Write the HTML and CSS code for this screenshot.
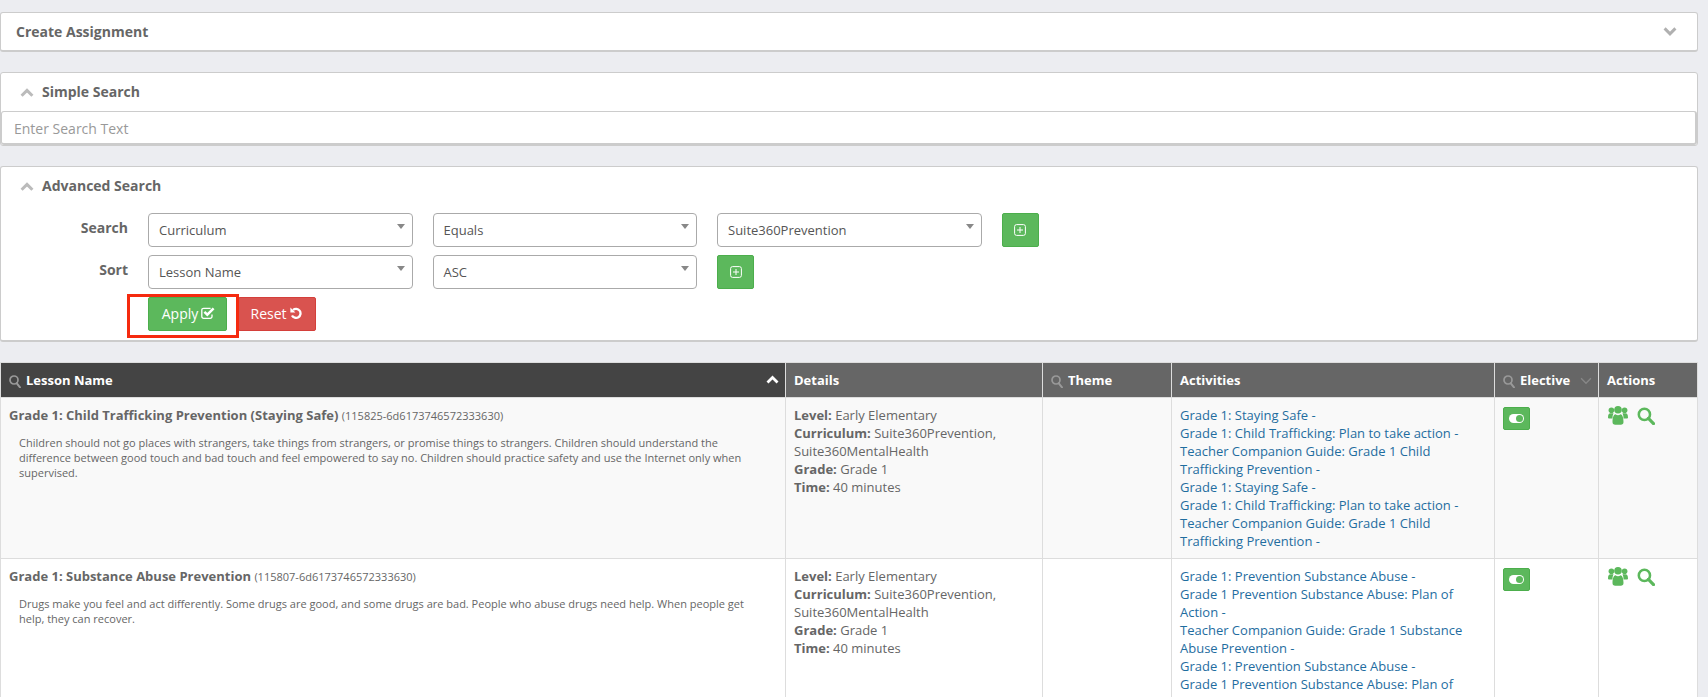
FILE: index.html
```html
<!DOCTYPE html>
<html lang="en">
<head>
<meta charset="utf-8">
<title>Assignments</title>
<link rel="stylesheet" href="styles.css">
</head>
<body>
<svg class="defs" width="0" height="0" aria-hidden="true">
  <symbol id="i-search" viewBox="0 0 17 17"><circle cx="7" cy="7" r="5.300" fill="none" stroke="currentColor" stroke-width="2.400"/><path d="M10.800 10.800 15.600 15.600" stroke="currentColor" stroke-width="3" stroke-linecap="round"/></symbol>
  <symbol id="i-search-thin" viewBox="0 0 12 13"><circle cx="5" cy="5" r="4" fill="none" stroke="currentColor" stroke-width="1.700"/><path d="M7.800 8.300 11 12.300" stroke="currentColor" stroke-width="2" stroke-linecap="round"/></symbol>
  <symbol id="i-up" viewBox="0 0 14 9"><path d="M1.600 7.800 7 2.400l5.400 5.400" fill="none" stroke="currentColor" stroke-width="3"/></symbol>
  <symbol id="i-down" viewBox="0 0 14 9"><path d="M1.600 1.400 7 6.800l5.400-5.400" fill="none" stroke="currentColor" stroke-width="3"/></symbol>
  <symbol id="i-down-thin" viewBox="0 0 13 9"><path d="M1 1.500 6.500 7 12 1.500" fill="none" stroke="currentColor" stroke-width="1.500"/></symbol>
  <symbol id="i-plus" viewBox="0 0 12 12"><rect x=".6" y=".6" width="10.800" height="10.800" rx="2" fill="none" stroke="currentColor" stroke-width="1"/><path d="M6 3v6M3 6h6" stroke="currentColor" stroke-width="1"/></symbol>
  <symbol id="i-check" viewBox="0 0 14 12"><path d="M11 7.500v2a1.800 1.800 0 0 1-1.800 1.800H2.600A1.800 1.800 0 0 1 .8 9.500V3.100a1.800 1.800 0 0 1 1.800-1.800h7" fill="none" stroke="currentColor" stroke-width="1.300"/><path d="M3.400 4.800 6.300 7.700 12.600 1.400" fill="none" stroke="currentColor" stroke-width="2.500"/></symbol>
  <symbol id="i-undo" viewBox="0 0 12 12"><path d="M3 3A4.500 4.500 0 1 1 2 8.400" fill="none" stroke="currentColor" stroke-width="2.300"/><path d="M.4.600v5h5z" fill="currentColor"/></symbol>
  <symbol id="i-users" viewBox="0 0 20 19"><circle cx="3.400" cy="4.300" r="2.800" fill="currentColor"/><circle cx="16.600" cy="4.300" r="2.800" fill="currentColor"/><circle cx="10" cy="3.800" r="3.800" fill="currentColor"/><path d="M0 11.500C0 8.500 1 7.300 2.500 7.300H5.500C4.800 9 4.500 10 4.500 12.500H1.500C.5 12.500 0 12.200 0 11.500zM20 11.500c0-3-1-4.200-2.500-4.200H14.500c.7 1.700 1 2.700 1 5.200h3c1 0 1.500-.3 1.500-1z" fill="currentColor"/><path d="M4.500 16c0-5 1.500-7.700 3-7.700.8.700 1.500 1 2.500 1s1.700-.3 2.500-1c1.500 0 3 2.700 3 7.700 0 1.700-1 2.800-2.700 2.800H7.200C5.500 18.800 4.500 17.700 4.500 16z" fill="currentColor"/></symbol>
</svg>

<main class="page">
  <section class="panel panel-assign">
    <h2 class="panel-title">Create Assignment</h2>
    <svg class="chev-assign"><use href="#i-down"/></svg>
  </section>

  <section class="panel panel-simple">
    <h2 class="panel-title with-chev"><svg class="chev"><use href="#i-up"/></svg>Simple Search</h2>
    <input class="search-input" type="text" placeholder="Enter Search Text">
  </section>

  <section class="panel panel-advanced">
    <h2 class="panel-title with-chev"><svg class="chev"><use href="#i-up"/></svg>Advanced Search</h2>
    <div class="form-row">
      <span class="form-label">Search</span>
      <div class="select">Curriculum</div>
      <div class="select">Equals</div>
      <div class="select">Suite360Prevention</div>
      <button class="btn-add" type="button" aria-label="Add"><svg class="plus"><use href="#i-plus"/></svg></button>
    </div>
    <div class="form-row">
      <span class="form-label">Sort</span>
      <div class="select">Lesson Name</div>
      <div class="select">ASC</div>
      <button class="btn-add" type="button" aria-label="Add"><svg class="plus"><use href="#i-plus"/></svg></button>
    </div>
    <div class="form-actions">
      <button class="btn btn-apply" type="button">Apply<svg class="btn-ico ico-check"><use href="#i-check"/></svg></button>
      <button class="btn btn-reset" type="button">Reset<svg class="btn-ico ico-undo"><use href="#i-undo"/></svg></button>
      <span class="highlight"></span>
    </div>
  </section>

  <table class="lessons">
    <colgroup>
      <col class="c-lesson"><col class="c-details"><col class="c-theme"><col class="c-activities"><col class="c-elective"><col class="c-actions">
    </colgroup>
    <thead>
      <tr>
        <th class="th-sorted"><svg class="th-search"><use href="#i-search-thin"/></svg>Lesson Name<svg class="sort-up"><use href="#i-up"/></svg></th>
        <th>Details</th>
        <th><svg class="th-search"><use href="#i-search-thin"/></svg>Theme</th>
        <th>Activities</th>
        <th><svg class="th-search"><use href="#i-search-thin"/></svg>Elective<svg class="sort-down"><use href="#i-down-thin"/></svg></th>
        <th>Actions</th>
      </tr>
    </thead>
    <tbody>
      <tr class="odd">
        <td>
          <div class="lesson-title"><strong>Grade 1: Child Trafficking Prevention (Staying Safe)</strong> <small>(115825-6d6173746572333630)</small></div>
          <p class="lesson-desc">Children should not go places with strangers, take things from strangers, or promise things to strangers. Children should understand the difference between good touch and bad touch and feel empowered to say no. Children should practice safety and use the Internet only when supervised.</p>
        </td>
        <td><b>Level:</b> Early Elementary<br><b>Curriculum:</b> Suite360Prevention, Suite360MentalHealth<br><b>Grade:</b> Grade 1<br><b>Time:</b> 40 minutes</td>
        <td></td>
        <td class="links">
          <a href="#">Grade 1: Staying Safe -</a>
          <a href="#">Grade 1: Child Trafficking: Plan to take action -</a>
          <a href="#">Teacher Companion Guide: Grade 1 Child Trafficking Prevention -</a>
          <a href="#">Grade 1: Staying Safe -</a>
          <a href="#">Grade 1: Child Trafficking: Plan to take action -</a>
          <a href="#">Teacher Companion Guide: Grade 1 Child Trafficking Prevention -</a>
        </td>
        <td><span class="toggle"><span class="knob"></span></span></td>
        <td class="actions"><svg class="a-users"><use href="#i-users"/></svg><svg class="a-search"><use href="#i-search"/></svg></td>
      </tr>
      <tr>
        <td>
          <div class="lesson-title"><strong>Grade 1: Substance Abuse Prevention</strong> <small>(115807-6d6173746572333630)</small></div>
          <p class="lesson-desc">Drugs make you feel and act differently. Some drugs are good, and some drugs are bad. People who abuse drugs need help. When people get help, they can recover.</p>
        </td>
        <td><b>Level:</b> Early Elementary<br><b>Curriculum:</b> Suite360Prevention, Suite360MentalHealth<br><b>Grade:</b> Grade 1<br><b>Time:</b> 40 minutes</td>
        <td></td>
        <td class="links">
          <a href="#">Grade 1: Prevention Substance Abuse -</a>
          <a href="#">Grade 1 Prevention Substance Abuse: Plan of Action -</a>
          <a href="#">Teacher Companion Guide: Grade 1 Substance Abuse Prevention -</a>
          <a href="#">Grade 1: Prevention Substance Abuse -</a>
          <a href="#">Grade 1 Prevention Substance Abuse: Plan of Action -</a>
        </td>
        <td><span class="toggle"><span class="knob"></span></span></td>
        <td class="actions"><svg class="a-users"><use href="#i-users"/></svg><svg class="a-search"><use href="#i-search"/></svg></td>
      </tr>
    </tbody>
  </table>
</main>
</body>
</html>
```

FILE: styles.css
```css
* { box-sizing: border-box; }
html, body { margin: 0; height: 697px; overflow: hidden; }
body { background: #ecedf1; font-family: "Open Sans", sans-serif; font-size: 13px; line-height: 18px; color: #666; }
.defs { position: absolute; }
.page { padding: 12px 10px 0 0; display: flex; flex-direction: column; }

.panel { position: relative; background: #fff; border: 1px solid #ccc; border-bottom-width: 2px; border-radius: 3px; }
.panel-assign { height: 40px; margin-bottom: 20px; display: flex; align-items: center; justify-content: space-between; padding: 0 20px 0 15px; }
.panel-simple { height: 74px; margin-bottom: 20px; border-bottom-width: 1px; }
.panel-advanced { height: 176px; margin-bottom: 20px; }

.panel-title { margin: 0; font-size: 14px; font-weight: 700; line-height: 20px; color: #666; }
.with-chev { display: flex; align-items: center; height: 38px; padding-left: 19px; }
.chev { width: 14px; height: 9px; margin-right: 8px; color: #bbb; }
.chev-assign { width: 14px; height: 9px; color: #b0b0b0; }

.search-input { display: block; width: 100%; height: 34px; padding: 1px 12px 0; border: 1px solid #ccc; border-width: 1px 2px 2px 1px; border-radius: 3px; font: 14px "Open Sans", sans-serif; color: #666; outline: none; }
.search-input::placeholder { color: #999; opacity: 1; }

.panel-advanced .with-chev { margin-bottom: 8px; }
.form-row { display: flex; gap: 20px; margin-bottom: 8px; align-items: flex-start; }
.form-label { width: 127px; text-align: right; font-size: 14px; font-weight: 700; line-height: 30px; color: #666; }
.select { position: relative; width: 264.5px; height: 34px; padding: 0 10px; border: 1px solid #aaa; border-radius: 4px; line-height: 33px; color: #555; background: #fff; }
.select::after { content: ""; position: absolute; right: 7px; top: 10px; border: 4px solid transparent; border-top: 5px solid #888; border-bottom: 0; }
.btn-add { display: flex; align-items: center; justify-content: center; width: 37px; height: 34px; padding: 0; background: #5cb85c; border: 1px solid #4cae4c; border-radius: 2px; color: #fff; }
.plus { width: 12px; height: 12px; }

.form-actions { position: relative; display: flex; margin-left: 147px; }
.btn { display: flex; align-items: center; justify-content: center; height: 34px; padding: 0 0 2px; border-radius: 2px; color: #fff; font: 14px "Open Sans", sans-serif; }
.btn-apply { width: 79px; padding-left: 2px; background: #5cb85c; border: 1px solid #4cae4c; }
.btn-reset { width: 78px; margin-left: 11px; padding-right: 2px; background: #d9534f; border: 1px solid #d43f3a; }
.ico-check { width: 14px; height: 12px; margin-left: 3px; }
.ico-undo { width: 12px; height: 12px; margin-left: 3px; }
.highlight { position: absolute; left: -21px; top: -3px; width: 112px; height: 44px; border: 3px solid #f52a0f; pointer-events: none; }

.lessons { width: 1697px; table-layout: fixed; border-collapse: collapse; background: #fff; }
.c-lesson { width: 785px; } .c-details { width: 257px; } .c-theme { width: 129px; }
.c-activities { width: 323px; } .c-elective { width: 104px; } .c-actions { width: 99px; }
.lessons th { height: 35px; padding: 0 8px; background: #666; color: #fff; font-size: 13px; font-weight: 700; line-height: 18px; text-align: left; border: 1px solid #ddd; border-bottom: 0; white-space: nowrap; position: relative; }
.lessons th.th-sorted { background: #444; }
.th-search { width: 12px; height: 13px; margin-right: 5px; color: #999; vertical-align: -3px; }
.sort-up { position: absolute; right: 6px; top: 12px; width: 13px; height: 9px; color: #fff; }
.sort-down { position: absolute; right: 6px; top: 14px; width: 12px; height: 8px; color: #888; }
.lessons td { padding: 8px; vertical-align: top; border: 1px solid #ddd; color: #666; font-size: 13px; line-height: 18px; }
.lessons .odd td { background: #f9f9f9; height: 161px; }
.lessons b { font-weight: 700; }
.lesson-title strong { font-weight: 700; }
.lesson-title small { font-size: 11px; }
.lesson-desc { margin: 10px 27px 0 10px; font-size: 11px; line-height: 15px; color: #666; }
.links a { display: block; color: #1f6d9f; text-decoration: none; }
.toggle { display: flex; align-items: center; justify-content: center; width: 27px; height: 23px; margin-top: 1px; background: #5cb85c; border: 1px solid #4cae4c; border-radius: 2px; }
.knob { position: relative; width: 15px; height: 9px; border-radius: 5px; background: #fff; }
.knob::after { content: ""; position: absolute; right: 1px; top: 1px; width: 7px; height: 7px; border-radius: 50%; background: #5cb85c; }
.lessons .actions { color: #5cb85c; white-space: nowrap; }
.a-users { width: 20px; height: 19px; margin-left: 1px; }
.a-search { width: 18px; height: 18px; margin-left: 9px; vertical-align: 0; }
```
